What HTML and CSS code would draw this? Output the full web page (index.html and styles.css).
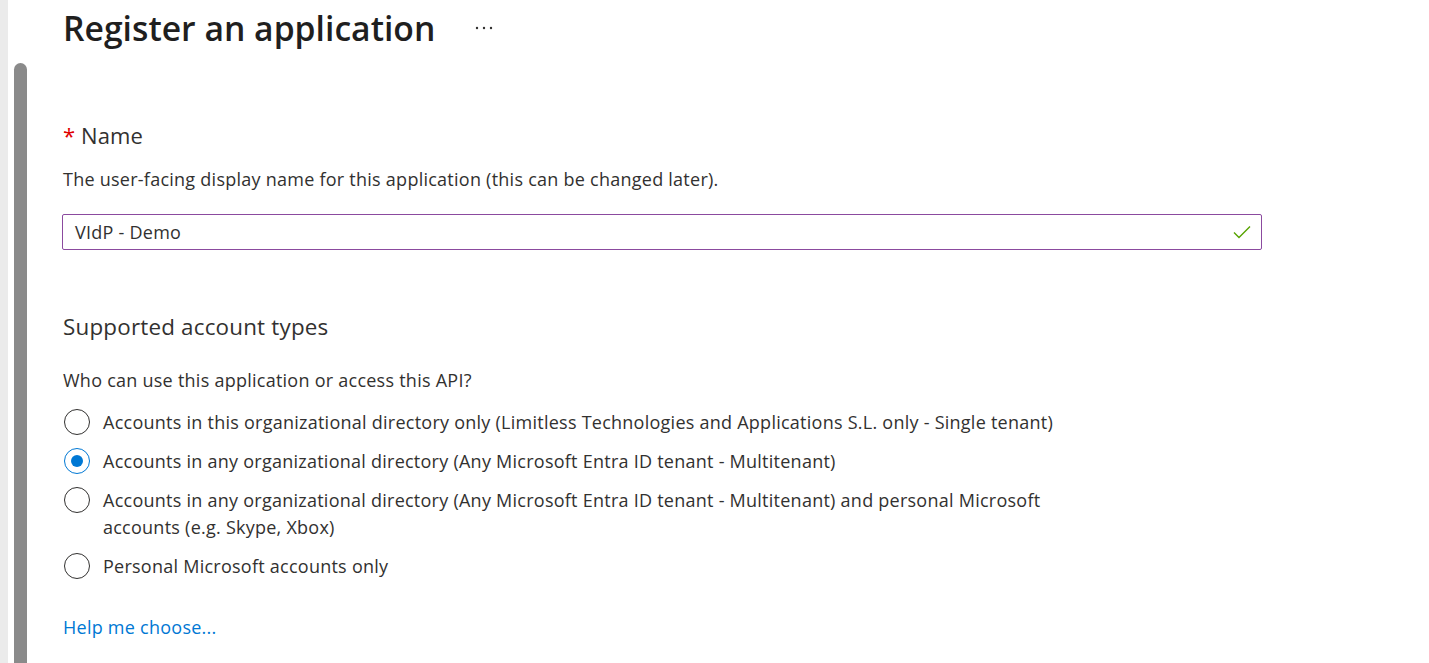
FILE: index.html
```html
<!DOCTYPE html>
<html lang="en">
<head>
<meta charset="utf-8">
<title>Register an application</title>
<link rel="stylesheet" href="styles.css">
</head>
<body>
<div class="page">
  <div class="gutter">
    <div class="strip"></div>
    <div class="track"><div class="thumb"></div></div>
  </div>
  <main class="content">
    <div class="title-row">
      <h1 class="title">Register an application</h1>
      <span class="more" aria-label="More">
        <svg width="18" height="4" viewBox="0 0 18 4"><circle cx="2" cy="2" r="1.2" fill="#323130"/><circle cx="9" cy="2" r="1.2" fill="#323130"/><circle cx="16" cy="2" r="1.2" fill="#323130"/></svg>
      </span>
    </div>

    <div class="field-label"><span class="req">*</span> Name</div>
    <p class="desc">The user-facing display name for this application (this can be changed later).</p>
    <div class="input">
      <span class="input-text">VIdP - Demo</span>
      <svg class="check" width="18" height="14" viewBox="0 0 18 14"><path d="M1 7.5 L6 12.5 L17 1.5" fill="none" stroke="#57a300" stroke-width="1.4"/></svg>
    </div>

    <h2 class="section">Supported account types</h2>
    <p class="question">Who can use this application or access this API?</p>
    <div class="radios">
      <div class="radio"><span class="dot"></span><span class="rlabel">Accounts in this organizational directory only (Limitless Technologies and Applications S.L. only - Single tenant)</span></div>
      <div class="radio"><span class="dot on"></span><span class="rlabel">Accounts in any organizational directory (Any Microsoft Entra ID tenant - Multitenant)</span></div>
      <div class="radio"><span class="dot"></span><span class="rlabel">Accounts in any organizational directory (Any Microsoft Entra ID tenant - Multitenant) and personal Microsoft accounts (e.g. Skype, Xbox)</span></div>
      <div class="radio"><span class="dot"></span><span class="rlabel">Personal Microsoft accounts only</span></div>
    </div>
    <a class="help" href="#">Help me choose...</a>
  </main>
</div>
</body>
</html>
```
FILE: styles.css
```css
html, body {
  margin: 0;
  padding: 0;
  background: #ffffff;
  height: 100%;
}
body {
  font-family: "Open Sans", "Noto Sans", "Liberation Sans", sans-serif;
  color: #323130;
  overflow: hidden;
}
.page {
  display: flex;
  height: 663px;
}
.gutter {
  display: flex;
  gap: 6px;
  width: 63px;
  flex: 0 0 63px;
}
.strip {
  width: 8px;
  background: #ebebeb;
}
.track {
  width: 13px;
  padding-top: 63px;
  display: flex;
}
.thumb {
  flex: 1;
  background: #8a8a8a;
  border-radius: 7px 7px 0 0;
}
.content {
  flex: 1;
  padding-top: 8px;
}
.title-row {
  display: flex;
  align-items: center;
  height: 40px;
}
.title {
  margin: 0;
  font-size: 33.7px;
  line-height: 40px;
  font-weight: 600;
  color: #1f1f1f;
}
.more {
  margin-left: 40px;
  display: flex;
  align-items: center;
  height: 40px;
}
.field-label {
  margin-top: 73px;
  font-size: 22px;
  line-height: 28px;
  letter-spacing: 0.1px;
}
.req {
  color: #e00000;
}
.desc, .question {
  margin: 0;
  font-size: 18px;
  line-height: 24px;
  letter-spacing: 0.25px;
}
.desc {
  margin-top: 18px;
}
.input {
  margin-top: 23px;
  margin-left: -1px;
  width: 1200px;
  height: 36px;
  box-sizing: border-box;
  border: 1px solid #8b4a9f;
  border-radius: 2px;
  display: flex;
  align-items: center;
  justify-content: space-between;
  padding: 0 10px 0 12px;
  font-size: 18px;
  letter-spacing: 0.25px;
}
.section {
  margin: 63px 0 0;
  font-size: 22.4px;
  line-height: 28px;
  font-weight: 400;
  letter-spacing: 0.2px;
}
.question {
  margin-top: 27px;
}
.radios {
  margin-top: 17px;
  display: flex;
  flex-direction: column;
  gap: 12px;
}
.radio {
  display: flex;
  align-items: flex-start;
  gap: 13px;
  font-size: 18px;
  line-height: 27px;
  letter-spacing: 0.25px;
}
.dot {
  flex: 0 0 auto;
  width: 26px;
  height: 26px;
  margin-left: 1px;
  box-sizing: border-box;
  border: 1.3px solid #323130;
  border-radius: 50%;
  position: relative;
}
.dot.on {
  border-color: #0078d4;
}
.dot.on::after {
  content: "";
  position: absolute;
  left: 50%;
  top: 50%;
  width: 12px;
  height: 12px;
  margin: -6px 0 0 -6px;
  border-radius: 50%;
  background: #0078d4;
}
.rlabel {
  max-width: 990px;
}
.help {
  display: inline-block;
  margin-top: 35px;
  font-size: 18px;
  line-height: 24px;
  letter-spacing: 0.25px;
  color: #0078d4;
  text-decoration: none;
}
```
